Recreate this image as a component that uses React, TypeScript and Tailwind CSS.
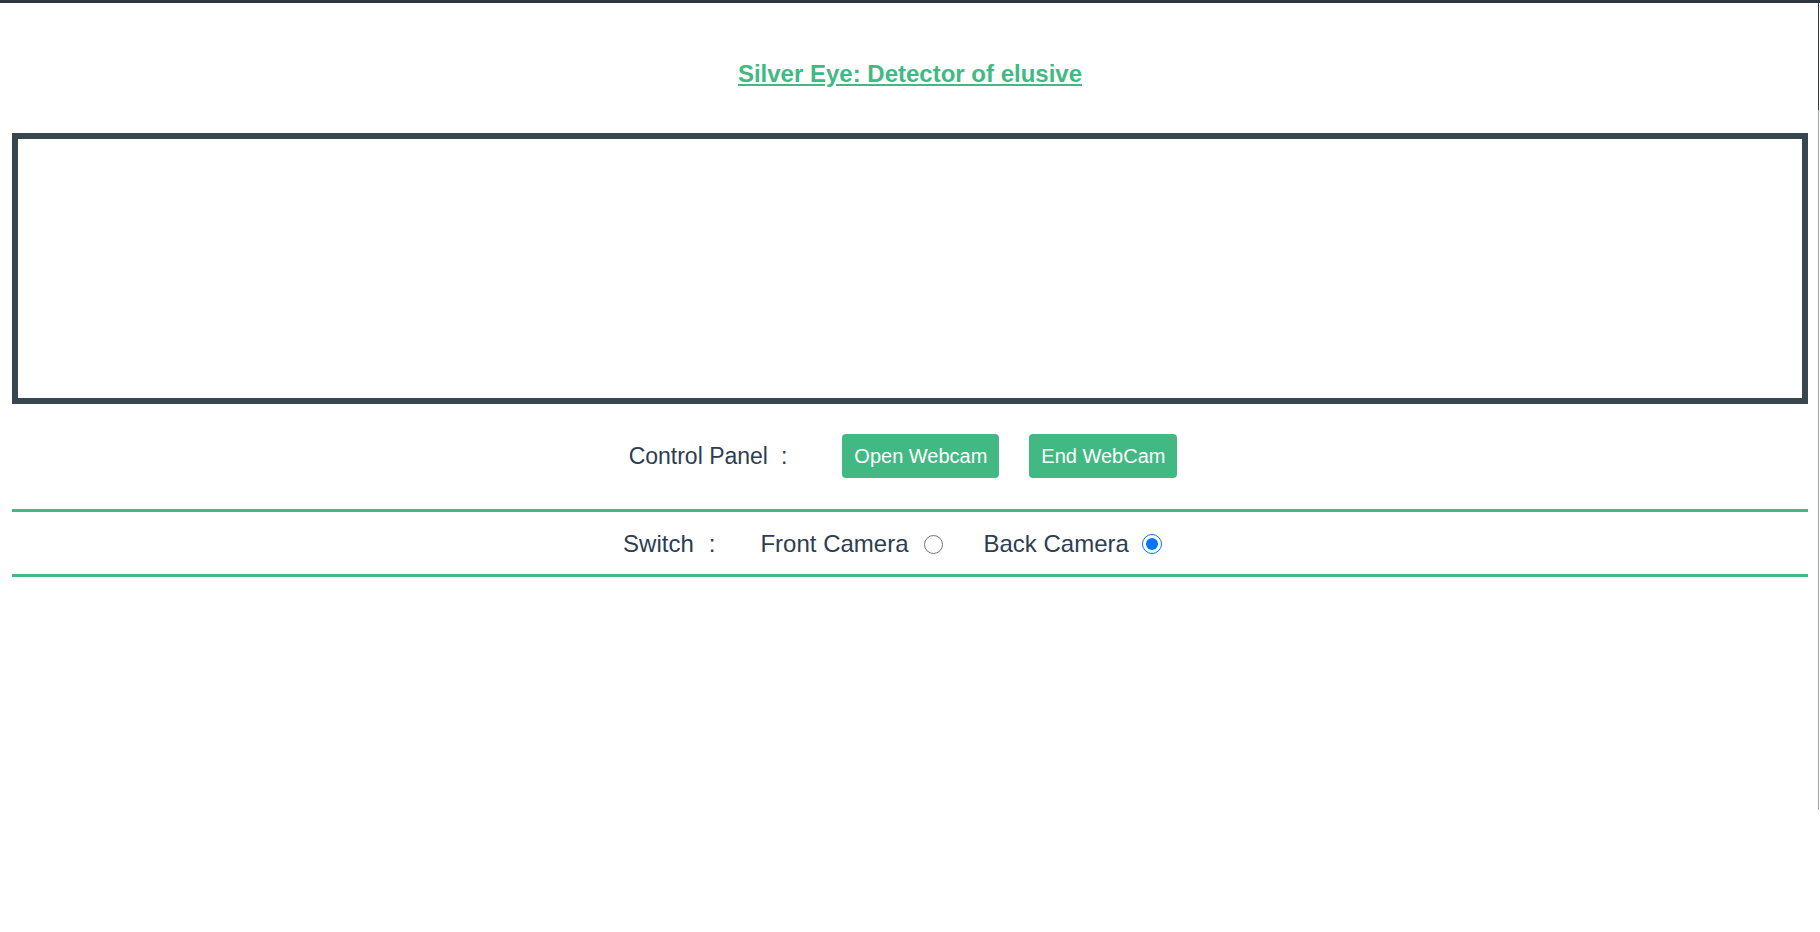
import { useState } from "react";

// Vue-style webcam page: title, video frame, control panel and camera switch
const FONT = "font-['Liberation_Sans',Arial,sans-serif]";

export default function App() {
  const [camera, setCamera] = useState<"front" | "back">("back");

  return (
    <div className={`relative w-[1820px] h-[932px] bg-white text-[#2c3e50] ${FONT}`}>
      {/* window edge */}
      <div className="absolute right-[1px] top-0 flex h-full w-px flex-col" aria-hidden="true">
        <div className="h-[110px] bg-[#333a44]" />
        <div className="h-[700px] bg-[#a0a4aa]" />
      </div>

      <div className="flex flex-col border-t-[3px] border-[#2e3542]">
        {/* Title */}
        <h2 className="mt-[57px] text-center text-[24px] leading-[28px] font-bold">
          <a href="#" className="text-[#42b983] underline">
            Silver Eye: Detector of elusive
          </a>
        </h2>

        {/* Video frame */}
        <div className="mx-[12px] mt-[45px] h-[271px] border-[6px] border-[#37474f]" />

        {/* Control panel */}
        <div className="mt-[30px] flex h-[44px] items-center justify-center pr-[14px]">
          <span className="text-[23px] leading-[28px]">Control Panel</span>
          <span className="ml-[13px] text-[23px] leading-[28px]">:</span>
          <button className="ml-[55px] flex h-[44px] w-[157px] items-center justify-center rounded-[4px] bg-[#42b983] text-[20px] text-white">
            Open Webcam
          </button>
          <button className="ml-[30px] flex h-[44px] w-[148px] items-center justify-center rounded-[4px] bg-[#42b983] text-[20px] text-white">
            End WebCam
          </button>
        </div>

        {/* Camera switch */}
        <div className="mx-[12px] mt-[31px] flex h-[68px] items-center justify-center border-y-[3px] border-[#42b983] pt-[2px] pr-[35px]">
          <span className="text-[24px] leading-[28px]">Switch</span>
          <span className="ml-[15px] text-[24px] leading-[28px]">:</span>
          <label className="ml-[45px] flex items-center text-[24px] leading-[28px]">
            Front Camera
            <input
              type="radio"
              name="camera"
              checked={camera === "front"}
              onChange={() => setCamera("front")}
              className="ml-[15px] h-[19px] w-[19px]"
            />
          </label>
          <label className="ml-[41px] flex items-center text-[24px] leading-[28px]">
            Back Camera
            <input
              type="radio"
              name="camera"
              checked={camera === "back"}
              onChange={() => setCamera("back")}
              className="ml-[13px] h-[20px] w-[20px]"
            />
          </label>
        </div>
      </div>
    </div>
  );
}
